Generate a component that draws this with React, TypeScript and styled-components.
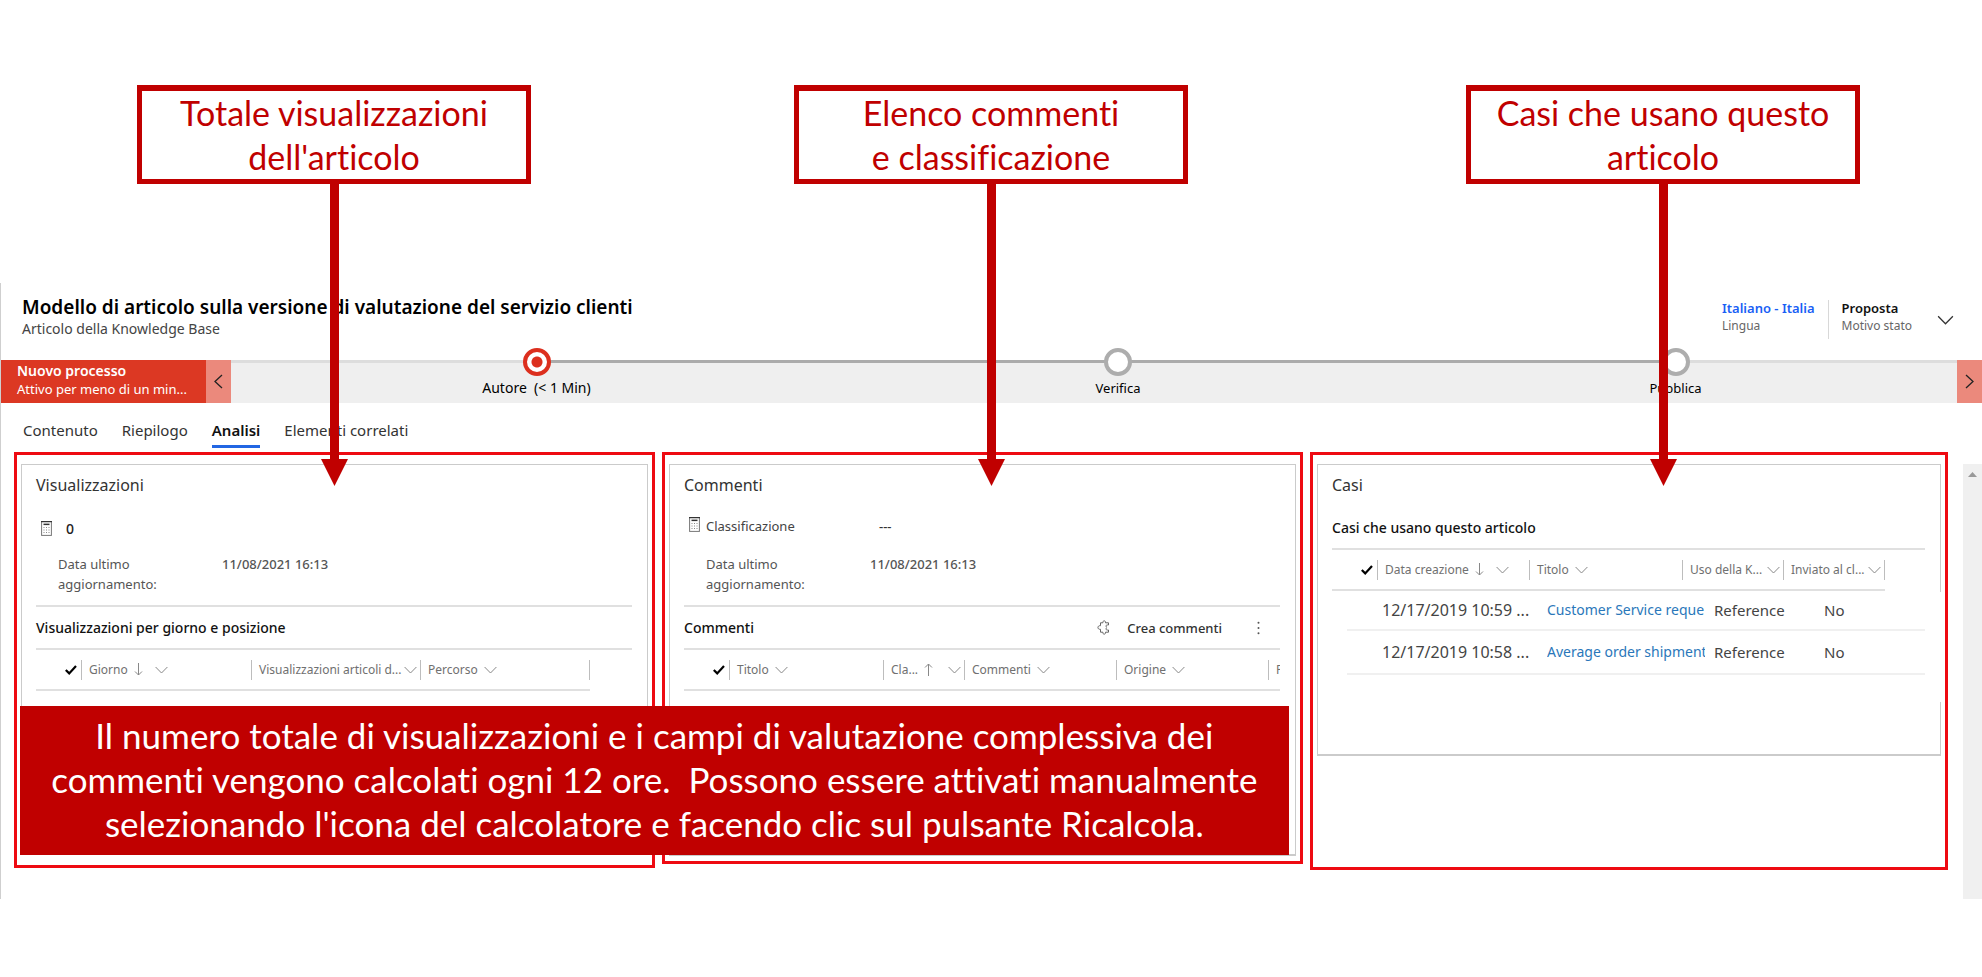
import React from "react";
import styled, { createGlobalStyle } from "styled-components";

const RED = "#c00000";
const OUTLINE = "#ee0a12";
const UI_FONT = '"Noto Sans", "Open Sans", sans-serif';
const NOTE_FONT = 'Lato, "Open Sans", sans-serif';

const GlobalStyle = createGlobalStyle`
  *, *::before, *::after { box-sizing: border-box; }
  body { margin: 0; background: #fff; color: #333; font-family: ${UI_FONT}; }
  button { font: inherit; color: inherit; background: none; border: 0; padding: 0; cursor: pointer; }
  a { text-decoration: none; }
  h1, h2, h3, p, dl, dd { margin: 0; }
  svg { flex-shrink: 0; }
`;

const Page = styled.main`
  display: flex;
  flex-direction: column;
  padding: 85px 0 78px;
`;

/* ---------- Callouts ---------- */

const CalloutRow = styled.div`
  display: grid;
  grid-template-columns: 137fr 394fr 263fr 394fr 278fr 394fr 122fr;
  padding-bottom: 99px;
`;

const Callout = styled.div<{ $column: number }>`
  grid-column: ${(p) => p.$column};
  position: relative;
  border: 5px solid ${RED};
  border-top-width: 6px;
  font: 400 34px/44px ${NOTE_FONT};
  font-variant-ligatures: none;
  color: ${RED};
  text-align: center;
`;

const Arrow = styled.svg`
  position: absolute;
  z-index: 3;
  top: calc(100% + 4px);
  left: calc(50% - 13px);
  width: 27px;
  height: 303px;
  fill: ${RED};
`;

/* ---------- Record window ---------- */

const Window = styled.section`
  display: flex;
  flex-direction: column;
  border-left: 1px solid #cfcfcf;
`;

const RecordHeader = styled.header`
  display: flex;
  justify-content: space-between;
  height: 77px;
  padding: 11px 28px 0 21px;
`;

const Title = styled.h1`
  font-size: 19px;
  line-height: 26px;
  font-weight: 600;
  color: #000;
`;

const Subtitle = styled.p`
  font-size: 14px;
  line-height: 18px;
  color: #444;
`;

const HeaderFields = styled.div`
  display: flex;
  align-items: flex-start;
  padding-top: 6px;
`;

const HeaderField = styled.div`
  display: flex;
  flex-direction: column;
  height: 39px;
  padding: 0 13px;
  font-size: 12px;
  line-height: 17px;
  color: #666;

  & + & {
    border-left: 1px solid #d8d8d8;
  }
`;

const fieldValue = `
  font-size: 13px;
  font-weight: 600;
`;

const FieldLink = styled.a`
  ${fieldValue}
  color: #1a5ff5;
`;

const FieldText = styled.span`
  ${fieldValue}
  color: #111;
`;

const ExpandButton = styled.button`
  display: flex;
  align-items: center;
  height: 39px;
  margin-left: 12px;
`;

/* ---------- Business process bar ---------- */

const ProcessBar = styled.div`
  display: flex;
  height: 43px;
  background: #efefef;
`;

const ProcessName = styled.div`
  width: 205px;
  padding: 2px 12px 0 16px;
  background: #dc3823;
  color: #fff;
  font-size: 13px;
  line-height: 18px;

  strong {
    display: block;
    font-size: 14px;
    font-weight: 600;
  }
`;

const ProcessToggle = styled.button`
  display: flex;
  align-items: center;
  justify-content: center;
  flex: 0 0 25px;
  background: #eb897c;
`;

const Stages = styled.ol`
  flex: 1;
  display: grid;
  grid-template-columns: 611fr 552fr 563fr;
  margin: 0;
  padding: 0;
  list-style: none;
`;

const Stage = styled.li<{ $before: string; $after: string; $active?: boolean }>`
  position: relative;
  display: flex;
  justify-content: center;
  padding-top: 18px;
  font-size: ${(p) => (p.$active ? 14 : 13)}px;
  line-height: 20px;
  color: #000;
  white-space: pre;

  &::before,
  &::after {
    content: "";
    position: absolute;
    top: 0;
    height: 3px;
  }
  &::before {
    left: 0;
    right: 50%;
    background: ${(p) => p.$before};
  }
  &::after {
    left: 50%;
    right: 0;
    background: ${(p) => p.$after};
  }
`;

const StageDot = styled.span<{ $active?: boolean }>`
  position: absolute;
  z-index: 1;
  top: -12px;
  left: calc(50% - 14px);
  width: 28px;
  height: 28px;
  border: 4px solid ${(p) => (p.$active ? "#dc2f1e" : "#adadad")};
  border-radius: 50%;
  background: ${(p) => (p.$active ? "radial-gradient(circle, #dc2f1e 5px, #fff 6px)" : "#fff")};
`;

/* ---------- Tabs ---------- */

const Tabs = styled.nav`
  display: flex;
  gap: 24px;
  padding: 15px 22px 4px;
`;

const Tab = styled.button<{ $active?: boolean }>`
  padding-bottom: 3px;
  border-bottom: 3px solid ${(p) => (p.$active ? "#2266e3" : "transparent")};
  font-size: 15px;
  line-height: 24px;
  font-weight: ${(p) => (p.$active ? 600 : 400)};
  color: ${(p) => (p.$active ? "#111" : "#333")};
`;

/* ---------- Panels ---------- */

const Body = styled.div`
  position: relative;
  display: flex;
  min-height: 447px;
`;

const Columns = styled.div`
  flex: 1;
  display: grid;
  grid-template-columns: minmax(0, 641fr) minmax(0, 641fr) minmax(0, 638fr);
  column-gap: 7px;
  align-items: start;
  padding: 0 15px 0 13px;
`;

const Outline = styled.div<{ $height: number }>`
  min-height: ${(p) => p.$height}px;
  padding: 9px 4px 5px;
  border: 3px solid ${OUTLINE};
`;

const Panel = styled.section<{ $height: number; $openSide?: boolean }>`
  position: relative;
  min-height: ${(p) => p.$height}px;
  padding: 8px 15px 8px 14px;
  border: 1px solid #cbcbcb;
  border-bottom-width: 2px;

  ${(p) =>
    p.$openSide &&
    `&::after {
      content: "";
      position: absolute;
      top: 127px;
      right: -1px;
      width: 1px;
      height: 110px;
      background: #fff;
    }`}
`;

const PanelTitle = styled.h2`
  font-size: 16px;
  line-height: 24px;
  font-weight: 400;
  color: #333;
`;

const MetricRow = styled.div`
  display: flex;
  align-items: center;
  height: 20px;
  margin-top: 21px;
  font-size: 14px;
  font-weight: 500;
  color: #222;
`;

const RecalcButton = styled.button`
  display: flex;
  margin: 0 14px 0 5px;
`;

const Metrics = styled.dl`
  display: grid;
  grid-template-columns: 186px 1fr;
  font-size: 13px;
  line-height: 20px;
  color: #555;

  dt {
    width: 132px;
    padding-left: 22px;
  }
  dd {
    font-weight: 500;
  }
`;

const UpdatedRow = styled(Metrics)`
  margin-top: 16px;
  padding-bottom: 11px;
`;

const RatingRow = styled(Metrics)`
  padding: 19px 0 2px;

  dt {
    position: relative;
    color: #444;
  }
  dd {
    padding-left: 9px;
    color: #333;
  }
`;

const RatingRecalc = styled.button`
  position: absolute;
  left: 5px;
  top: 1px;
  display: flex;
`;

const SubHeader = styled.div<{ $ruled?: boolean }>`
  display: flex;
  align-items: center;
  height: ${(p) => (p.$ruled ? 43 : 40)}px;
  margin-top: ${(p) => (p.$ruled ? 0 : 11)}px;
  border-top: ${(p) => (p.$ruled ? "2px solid #e0e0e0" : "0")};
`;

const SubTitle = styled.h3`
  flex: 1;
  font-size: 14px;
  line-height: 20px;
  font-weight: 500;
  color: #111;
`;

const Command = styled.button`
  display: flex;
  align-items: center;
  gap: 17px;
  margin-right: 35px;
  font-size: 13px;
  line-height: 20px;
  font-weight: 500;
  color: #333;
`;

const MoreButton = styled.button`
  display: flex;
  margin-right: 20px;
`;

/* ---------- Grids ---------- */

const Clip = styled.div`
  overflow: hidden;
`;

const Grid = styled.table`
  width: 100%;
  table-layout: fixed;
  border-collapse: separate;
  border-spacing: 0;
  border-top: 2px solid #e0e0e0;

  th,
  td {
    padding: 0;
    text-align: left;
    font-weight: 400;
  }
`;

const HeadCell = styled.th`
  height: 41px;
  border-bottom: 2px solid #e0e0e0;
`;

const HeadButton = styled.button<{ $last?: boolean; $spread?: boolean; $sorted?: boolean }>`
  display: flex;
  align-items: center;
  gap: ${(p) => (p.$spread && !p.$sorted ? 2 : 6)}px;
  width: 100%;
  height: 20px;
  padding: 0 3px 0 7px;
  border-left: 1px solid #bdbdbd;
  border-right: ${(p) => (p.$last ? "1px solid #bdbdbd" : "0")};
  font-size: 12px;
  line-height: 20px;
  color: #707070;
  white-space: nowrap;

  svg:last-child {
    margin-left: ${(p) => (p.$spread ? "auto" : p.$sorted ? "6px" : "0")};
  }
`;

const CheckHead = styled(HeadCell)`
  svg {
    display: block;
    margin: 0 4px 0 auto;
  }
`;

const BodyRow = styled.tr`
  height: 44px;
  font-size: 15px;
  color: #444;
  white-space: nowrap;

  &:first-child {
    height: 40px;
  }
  td + td {
    border-bottom: 2px solid #f0f0f0;
  }
`;

const BodyCell = styled.td<{ $indent: number }>`
  && {
    padding-left: ${(p) => p.$indent}px;
  }
`;

const DateText = styled.span`
  font-size: 16px;
`;

const CaseLink = styled.a`
  display: block;
  width: 158px;
  overflow: hidden;
  font-size: 14px;
  line-height: 20px;
  color: #2a77ba;
`;

/* ---------- Scroll bar and banner ---------- */

const ScrollTrack = styled.div`
  display: flex;
  justify-content: center;
  width: 19px;
  margin-top: 12px;
  padding-top: 8px;
  background: #f0f0f0;
`;

const Banner = styled.p`
  position: absolute;
  z-index: 2;
  top: 254px;
  left: 19px;
  right: 35%;
  padding: 7px 0 10px;
  background: ${RED};
  color: #fff;
  font: 400 35px/44px ${NOTE_FONT};
  font-variant-ligatures: none;
  text-align: center;

  span {
    display: block;
    white-space: pre;
  }
`;

/* ---------- Icons ---------- */

const Chevron = ({ w = 13, h = 8, color = "#888888" }) => (
  <svg width={w} height={h} viewBox="0 0 13 8" fill="none" stroke={color} strokeWidth="1" aria-hidden="true">
    <path d="M.6 1 6.5 7 12.4 1" />
  </svg>
);

const SideChevron = ({ flip = false }) => (
  <svg width="9" height="15" viewBox="0 0 9 15" fill="none" stroke="#222" strokeWidth="1.3" aria-hidden="true">
    <path d={flip ? "M1 1 8 7.5 1 14" : "M8 1 1 7.5 8 14"} />
  </svg>
);

const SortArrow = ({ up = false }) => (
  <svg width="9" height="13" viewBox="0 0 9 13" fill="none" stroke="#888" strokeWidth="1" aria-hidden="true">
    <path d={up ? "M4.5 13V1M1 4.5 4.5 1 8 4.5" : "M4.5 0V12M1 8.5 4.5 12 8 8.5"} />
  </svg>
);

const Check = () => (
  <svg width="12" height="10" viewBox="0 0 12 10" fill="none" stroke="#000" strokeWidth="2.2" aria-hidden="true">
    <path d="M.8 5 4.2 8.4 11 1" />
  </svg>
);

const Calculator = () => (
  <svg width="11" height="15" viewBox="0 0 11 15" fill="none" aria-hidden="true">
    <rect x="0.6" y="0.6" width="9.8" height="13.8" fill="#fff" stroke="#777" strokeWidth="1" />
    <path d="M0 .6H11" stroke="#333" strokeWidth="1.2" />
    <rect x="2.5" y="2.6" width="6" height="1.5" fill="#333" />
    <path
      d="M2.5 6.5h1m1.500 0h1m1.500 0h1M2.5 9h1m1.500 0h1m1.500 0h1M2.5 11.5h1m1.500 0h1m1.500 0h1"
      stroke="#888"
      strokeWidth="1"
    />
  </svg>
);

const Puzzle = () => (
  <svg width="13" height="15" viewBox="0 0 13 15" fill="none" stroke="#666" strokeWidth="1" aria-hidden="true">
    <path d="M3.5 2.8H5.9C5.4.2 9 .2 8.500 2.8H11.5V5C8.5 4.6 8.5 6.4 10 7.5 8.5 8.6 8.5 10.4 11.5 10V12.2H8.5C9 14.8 5.4 14.8 5.9 12.2H3.5V9.3C.1 9.8.1 5.2 3.5 5.7Z" />
  </svg>
);

const Dots = () => (
  <svg width="3" height="14" viewBox="0 0 3 14" fill="#555" aria-hidden="true">
    <circle cx="1.5" cy="1.8" r="1" />
    <circle cx="1.5" cy="7" r="1" />
    <circle cx="1.5" cy="12.2" r="1" />
  </svg>
);

const DownArrow = () => (
  <Arrow viewBox="0 0 27 303" aria-hidden="true">
    <path d="M9 0H18V276H27L13.5 303 0 276H9Z" />
  </Arrow>
);

/* ---------- Data ---------- */

type Column = { label: string; width?: number; sort?: "up" | "down"; spread?: boolean; plain?: boolean };

const viewColumns: Column[] = [
  { label: "Giorno", width: 170, sort: "down" },
  { label: "Visualizzazioni articoli d...", width: 169, spread: true },
  { label: "Percorso", width: 170 },
];

const commentColumns: Column[] = [
  { label: "Titolo", width: 154 },
  { label: "Cla...", width: 81, sort: "up", spread: true },
  { label: "Commenti", width: 152 },
  { label: "Origine", width: 152 },
  { label: "P", plain: true },
];

const caseColumns: Column[] = [
  { label: "Data creazione", width: 152, sort: "down" },
  { label: "Titolo", width: 153 },
  { label: "Uso della K...", width: 101, spread: true },
  { label: "Inviato al cl...", width: 102, spread: true },
];

const cases = [
  { date: "12/17/2019 10:59 ...", title: "Customer Service reque", use: "Reference", sent: "No" },
  { date: "12/17/2019 10:58 ...", title: "Average order shipment", use: "Reference", sent: "No" },
];

const DataGrid = ({ columns, open, children }: { columns: Column[]; open?: boolean; children?: React.ReactNode }) => (
  <Grid>
    <colgroup>
      <col width={15} />
      <col width={30} />
      {columns.map((c, i) => (
        <col key={i} width={c.width} />
      ))}
      {!open && <col />}
    </colgroup>
    <thead>
      <tr>
        <CheckHead colSpan={2} aria-label="Seleziona">
          <Check />
        </CheckHead>
        {columns.map((c, i) => (
          <HeadCell key={i} scope="col">
            <HeadButton type="button" $spread={c.spread} $sorted={!!c.sort} $last={!open && i === columns.length - 1}>
              {c.label}
              {c.sort && <SortArrow up={c.sort === "up"} />}
              {!c.plain && <Chevron />}
            </HeadButton>
          </HeadCell>
        ))}
      </tr>
    </thead>
    {children && <tbody>{children}</tbody>}
  </Grid>
);

const Updated = () => (
  <UpdatedRow>
    <dt>Data ultimo aggiornamento:</dt>
    <dd>11/08/2021 16:13</dd>
  </UpdatedRow>
);

export default function App() {
  return (
    <Page>
      <GlobalStyle />
      <CalloutRow>
        <Callout $column={2}>
          Totale visualizzazioni
          <br />
          dell'articolo
          <DownArrow />
        </Callout>
        <Callout $column={4}>
          Elenco commenti
          <br />e classificazione
          <DownArrow />
        </Callout>
        <Callout $column={6}>
          Casi che usano questo
          <br />
          articolo
          <DownArrow />
        </Callout>
      </CalloutRow>

      <Window>
        <RecordHeader>
          <div>
            <Title>Modello di articolo sulla versione di valutazione del servizio clienti</Title>
            <Subtitle>Articolo della Knowledge Base</Subtitle>
          </div>
          <HeaderFields>
            <HeaderField>
              <FieldLink href="#lingua">Italiano - Italia</FieldLink>
              Lingua
            </HeaderField>
            <HeaderField>
              <FieldText>Proposta</FieldText>
              Motivo stato
            </HeaderField>
            <ExpandButton type="button" aria-label="Espandi intestazione">
              <Chevron w={17} h={10} color="#333" />
            </ExpandButton>
          </HeaderFields>
        </RecordHeader>

        <ProcessBar>
          <ProcessName>
            <strong>Nuovo processo</strong>
            Attivo per meno di un min...
          </ProcessName>
          <ProcessToggle type="button" aria-label="Indietro">
            <SideChevron />
          </ProcessToggle>
          <Stages>
            <Stage $before="#dddddd" $after="#ababab" $active>
              <StageDot $active />
              {"Autore  (< 1 Min)"}
            </Stage>
            <Stage $before="#ababab" $after="#ababab">
              <StageDot />
              Verifica
            </Stage>
            <Stage $before="#ababab" $after="#dddddd">
              <StageDot />
              Pubblica
            </Stage>
          </Stages>
          <ProcessToggle type="button" aria-label="Avanti">
            <SideChevron flip />
          </ProcessToggle>
        </ProcessBar>

        <Tabs>
          <Tab type="button">Contenuto</Tab>
          <Tab type="button">Riepilogo</Tab>
          <Tab type="button" $active>
            Analisi
          </Tab>
          <Tab type="button">Elementi correlati</Tab>
        </Tabs>

        <Body>
          <Columns>
            <Outline $height={416}>
              <Panel $height={388}>
                <PanelTitle>Visualizzazioni</PanelTitle>
                <MetricRow>
                  <RecalcButton type="button" aria-label="Ricalcola visualizzazioni">
                    <Calculator />
                  </RecalcButton>
                  0
                </MetricRow>
                <Updated />
                <SubHeader $ruled>
                  <SubTitle>Visualizzazioni per giorno e posizione</SubTitle>
                </SubHeader>
                <DataGrid columns={viewColumns} />
              </Panel>
            </Outline>

            <Outline $height={412}>
              <Panel $height={392}>
                <PanelTitle>Commenti</PanelTitle>
                <RatingRow>
                  <dt>
                    <RatingRecalc type="button" aria-label="Ricalcola classificazione">
                      <Calculator />
                    </RatingRecalc>
                    Classificazione
                  </dt>
                  <dd>---</dd>
                </RatingRow>
                <Updated />
                <SubHeader $ruled>
                  <SubTitle>Commenti</SubTitle>
                  <Command type="button">
                    <Puzzle />
                    Crea commenti
                  </Command>
                  <MoreButton type="button" aria-label="Altri comandi">
                    <Dots />
                  </MoreButton>
                </SubHeader>
                <Clip>
                  <DataGrid columns={commentColumns} open />
                </Clip>
              </Panel>
            </Outline>

            <Outline $height={418}>
              <Panel $height={292} $openSide>
                <PanelTitle>Casi</PanelTitle>
                <SubHeader>
                  <SubTitle>Casi che usano questo articolo</SubTitle>
                </SubHeader>
                <DataGrid columns={caseColumns}>
                  {cases.map((c) => (
                    <BodyRow key={c.date}>
                      <td />
                      <td />
                      <BodyCell $indent={5}>
                        <DateText>{c.date}</DateText>
                      </BodyCell>
                      <BodyCell $indent={18}>
                        <CaseLink href="#caso">{c.title}</CaseLink>
                      </BodyCell>
                      <BodyCell $indent={32}>{c.use}</BodyCell>
                      <BodyCell $indent={41}>{c.sent}</BodyCell>
                      <td />
                    </BodyRow>
                  ))}
                </DataGrid>
              </Panel>
            </Outline>
          </Columns>

          <ScrollTrack>
            <svg width="9" height="5" viewBox="0 0 9 5" fill="#999" aria-hidden="true">
              <path d="M0 5 4.5 0 9 5Z" />
            </svg>
          </ScrollTrack>

          <Banner>
            <span>Il numero totale di visualizzazioni e i campi di valutazione complessiva dei</span>
            <span>{"commenti vengono calcolati ogni 12 ore.  Possono essere attivati manualmente"}</span>
            <span>selezionando l'icona del calcolatore e facendo clic sul pulsante Ricalcola.</span>
          </Banner>
        </Body>
      </Window>
    </Page>
  );
}
